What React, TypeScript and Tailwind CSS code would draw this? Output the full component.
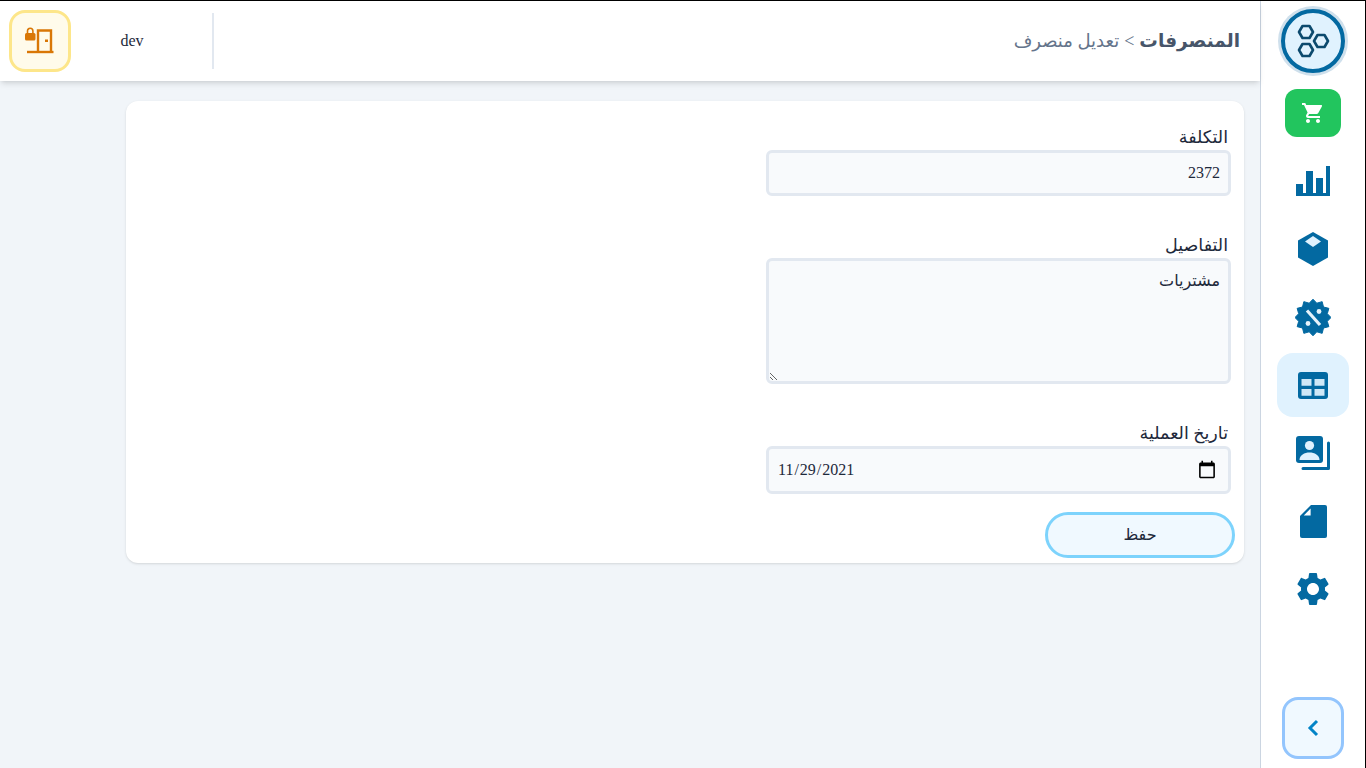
import { MdSettings, MdShoppingCart } from "react-icons/md";

function LogoIcon() {
  return (
    <svg width="38" height="38" viewBox="0 0 38 38" fill="none" stroke="#0c4a6e" strokeWidth="2.600" strokeLinejoin="round">
      <path d="M8.500 4 15.500 4 19 10 15.500 16 8.500 16 5 10Z" />
      <path d="M23.500 13 30.500 13 34 19 30.500 25 23.500 25 20 19Z" />
      <path d="M8.500 22 15.500 22 19 28 15.500 34 8.500 34 5 28Z" />
    </svg>
  );
}

function ChartIcon() {
  return (
    <svg width="34" height="30" viewBox="0 0 34 30" fill="#0369a1">
      <path d="M0 18h7v12H0zM10 5h7v25h-7zM20 12h7v18h-7zM30 0h4v30h-4zM0 27h34v3H0z" />
    </svg>
  );
}

function CubeIcon() {
  return (
    <svg width="30" height="34" viewBox="0 0 30 34">
      <path d="M15 0 30 8.500v17L15 34 0 25.500v-17Z" fill="#0369a1" />
      <path d="M15 4 23 9.500 15 15 7 9.500Z" fill="#e0f2fe" />
    </svg>
  );
}

function DiscountIcon() {
  return (
    <svg width="36" height="37" viewBox="0 0 36 37">
      <path
        d="M18 .2 21.800 4.200 27.150 2.650 28.500 8 33.850 9.350 32.300 14.670 36 18.500 32.300 22.330 33.850 27.650 28.500 29 27.150 34.350 21.800 32.800 18 36.800 14.200 32.800 8.850 34.350 7.500 29 2.150 27.650 3.700 22.330 0 18.500 3.700 14.670 2.150 9.350 7.500 8 8.850 2.650 14.200 4.200Z"
        fill="#0369a1"
        stroke="#0369a1"
        strokeLinejoin="round"
      />
      <path d="M12 11.500 25 26" stroke="#e6f3fb" strokeWidth="3.200" />
      <circle cx="24" cy="12.500" r="2.400" fill="#e6f3fb" />
      <circle cx="13" cy="24.500" r="2.400" fill="#e6f3fb" />
    </svg>
  );
}

function TableIcon() {
  return (
    <svg width="30" height="27" viewBox="0 0 30 27">
      <rect width="30" height="27" rx="3" fill="#0369a1" />
      <path d="M3.500 7h10v6.700h-10zM16.500 7h10v6.700h-10zM3.500 17h10v6.700h-10zM16.500 17h10v6.700h-10z" fill="#cfe8f7" />
    </svg>
  );
}

function ContactsIcon() {
  return (
    <svg width="34" height="34" viewBox="0 0 34 34">
      <rect width="27" height="27" rx="3" fill="#0369a1" />
      <circle cx="13.500" cy="9.500" r="4.600" fill="#e0f2fe" />
      <path d="M3.500 24c0-5 5-7.500 10-7.500s10 2.500 10 7.500Z" fill="#e0f2fe" />
      <path d="M32.500 7V32.500H7" fill="none" stroke="#0369a1" strokeWidth="3" strokeLinecap="round" strokeLinejoin="round" />
    </svg>
  );
}

function FileIcon() {
  return (
    <svg width="27" height="33" viewBox="0 0 27 33">
      <path d="M11 0h14a2 2 0 0 1 2 2v29a2 2 0 0 1-2 2H2a2 2 0 0 1-2-2V11Z" fill="#0369a1" />
      <path d="M10.600 3.500V10.600H3.800Z" fill="#fff" />
    </svg>
  );
}

function DoorLockIcon() {
  return (
    <svg width="30" height="28" viewBox="0 0 30 28" fill="none" stroke="#d97706">
      <path d="M2 25h26.500" strokeWidth="2.400" />
      <path d="M13 25V3.500h13V25" strokeWidth="2.400" />
      <rect x="20" y="12.500" width="3" height="2.500" fill="#d97706" stroke="none" />
      <rect x="0" y="6" width="10.500" height="7.500" rx="1.500" fill="#d97706" stroke="none" />
      <path d="M2.500 6.500V4a2.700 2.700 0 0 1 5.400 0v2.500" strokeWidth="1.600" />
    </svg>
  );
}

const navItems = [
  { icon: <ChartIcon />, active: false },
  { icon: <CubeIcon />, active: false },
  { icon: <DiscountIcon />, active: false },
  { icon: <TableIcon />, active: true },
  { icon: <ContactsIcon />, active: false },
  { icon: <FileIcon />, active: false },
  { icon: <MdSettings size={40} color="#0369a1" />, active: false },
];

function Sidebar() {
  return (
    <aside className="flex h-full w-[105px] shrink-0 flex-col items-center border-l border-[#cbd5e1] bg-white pb-[8px]">
      <div className="mt-2 flex h-16 w-16 shrink-0 items-center justify-center rounded-full border-[4px] border-[#0369a1] bg-[#e0f2fe] shadow-[0_0_0_3px_#cfe0ec]">
        <LogoIcon />
      </div>
      <div className="mt-2 flex flex-col gap-1">
        <div className="flex h-16 w-[72px] items-center justify-center">
          <div className="flex h-12 w-14 items-center justify-center rounded-xl bg-[#22c55e]">
            <MdShoppingCart size={24} color="#fff" />
          </div>
        </div>
        {navItems.map((item, i) => (
          <div
            key={i}
            className={
              item.active
                ? "flex h-16 w-[72px] items-center justify-center rounded-2xl bg-[#e0f2fe]"
                : "flex h-16 w-[72px] items-center justify-center"
            }
          >
            {item.icon}
          </div>
        ))}
      </div>
      <button className="mb-px mt-auto flex h-[62px] w-[62px] items-center justify-center rounded-2xl border-[3px] border-[#93c5fd] bg-[#f0f9ff]">
        <svg width="14" height="18" viewBox="0 0 14 18" fill="none" stroke="#0284c7" strokeWidth="3">
          <path d="M11 2 4 9l7 7" />
        </svg>
      </button>
    </aside>
  );
}

function Header() {
  return (
    <header className="relative flex h-[80px] shrink-0 items-center justify-between bg-white pl-[9px] pr-5 shadow-md">
      <div className="flex items-center">
        <button className="flex h-[62px] w-[62px] items-center justify-center rounded-2xl border-[3px] border-[#fde68a] bg-[#fffbeb]">
          <DoorLockIcon />
        </button>
        <span className="w-[122px] text-center text-base text-[#1e293b]">dev</span>
        <div className="ml-[19px] h-14 w-[2px] bg-[#e2e8f0]" />
      </div>
      <div dir="rtl" className="flex items-baseline gap-[5px] text-[#64748b]">
        <span className="text-[18.500px] font-bold text-[#475569]">المنصرفات</span>
        <span className="text-lg">&gt;</span>
        <span className="text-lg">تعديل منصرف</span>
      </div>
    </header>
  );
}

const fieldClass =
  "w-[465px] rounded-md border-[3px] border-[#e2e8f0] bg-[#f8fafc] px-2 text-base text-[#1e293b] outline-none";
const labelClass = "block pr-[3px] text-[17.500px] leading-[26px] text-[#1e293b]";

function EditForm() {
  return (
    <div dir="rtl" className="flex h-[462px] w-[1118px] flex-col rounded-xl bg-white pr-[13px] pt-[23px] shadow-sm">
      <label className={labelClass}>التكلفة</label>
      <input className={`${fieldClass} h-[46px]`} defaultValue="2372" />
      <label className={`${labelClass} mt-[36px]`}>التفاصيل</label>
      <textarea className={`${fieldClass} h-[126px] py-2`} defaultValue="مشتريات" />
      <label className={`${labelClass} mt-[36px]`}>تاريخ العملية</label>
      <input
        type="date"
        dir="ltr"
        className={`${fieldClass} h-[48px] [&::-webkit-calendar-picker-indicator]:mr-[1px] [&::-webkit-calendar-picker-indicator]:h-[20px] [&::-webkit-calendar-picker-indicator]:w-[20px]`}
        defaultValue="2021-11-29"
      />
      <button className="mr-[-4px] mt-[18px] h-[46px] w-[190px] rounded-full border-[3px] border-[#7dd3fc] bg-[#f0f9ff] text-base text-[#1e293b]">
        حفظ
      </button>
    </div>
  );
}

export default function App() {
  return (
    <div className="flex h-screen w-full overflow-hidden border-r border-t border-black bg-[#f1f5f9] font-['Liberation_Serif','DejaVu_Sans',serif]">
      <div className="flex h-full min-w-0 flex-1 flex-col">
        <Header />
        <main className="flex flex-1 justify-end pr-4 pt-5">
          <EditForm />
        </main>
      </div>
      <Sidebar />
    </div>
  );
}
